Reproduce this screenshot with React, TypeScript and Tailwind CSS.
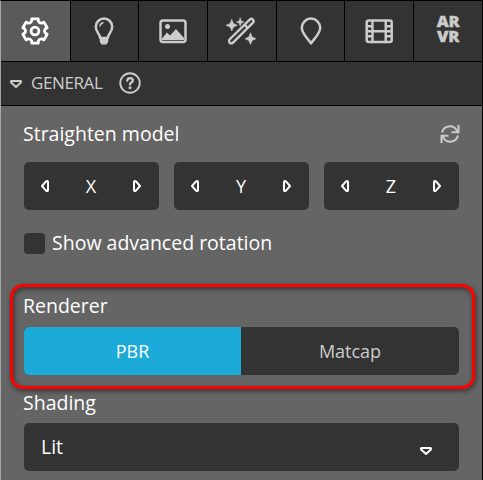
import type { ReactNode } from "react";

function Tab({ active, children }: { active?: boolean; children: ReactNode }) {
  return (
    <button
      className={
        active
          ? "flex h-[60px] items-center justify-center bg-[#5a5a5a] text-white"
          : "flex h-[60px] items-center justify-center bg-[#333333] text-[#cccccc]"
      }
    >
      {children}
    </button>
  );
}

function Icon({ children, className = "h-8 w-8" }: { children: ReactNode; className?: string }) {
  return (
    <svg
      viewBox="0 0 32 32"
      className={className}
      fill="none"
      stroke="currentColor"
      strokeWidth="2.5"
      strokeLinejoin="round"
      strokeLinecap="round"
    >
      {children}
    </svg>
  );
}

// Outline of a gear with six rounded teeth around (16, 16).
const gearPath = (() => {
  const point = (r: number, deg: number) => {
    const a = (deg * Math.PI) / 180;
    return `${(16 + r * Math.cos(a)).toFixed(2)} ${(16 + r * Math.sin(a)).toFixed(2)}`;
  };
  let d = "";
  for (let i = 0; i < 6; i++) {
    const c = -90 + i * 60;
    d += `${i ? "L" : "M"}${point(10.4, c - 19)} L${point(12.6, c - 15)} L${point(12.6, c + 15)} L${point(10.4, c + 19)} Q${point(8.8, c + 30)} ${point(10.4, c + 41)} `;
  }
  return d + "Z";
})();

function SideTriangle({ flip }: { flip?: boolean }) {
  return (
    <svg viewBox="0 0 10 14" className={flip ? "h-[14px] w-[10px] rotate-180" : "h-[14px] w-[10px]"} fill="none" stroke="white" strokeWidth="2" strokeLinejoin="round">
      <path d="M2 7 L5.8 2.6 Q8 1 8 3 V11 Q8 13 5.8 11.4 Z" />
    </svg>
  );
}

function DownTriangle({ className }: { className: string }) {
  return (
    <svg viewBox="0 0 14 10" className={className} fill="none" stroke="currentColor" strokeWidth="2" strokeLinejoin="round">
      <path d="M3 2 H11 Q13 2 11.6 3.8 L7 8 L2.4 3.8 Q1 2 3 2 Z" />
    </svg>
  );
}

function AxisControl({ axis }: { axis: string }) {
  return (
    <div className="flex h-12 w-[135px] items-center justify-between rounded-[5px] bg-[#333333] pr-[17px] pl-4 text-[18px]">
      <SideTriangle />
      <span>{axis}</span>
      <SideTriangle flip />
    </div>
  );
}

export default function App() {
  return (
    <div className="h-[480px] w-[483px] overflow-hidden border-t border-r border-l border-t-black border-r-black border-l-[#a5a5a5] bg-[#656565] font-['Open_Sans',sans-serif] text-white">
      <nav className="grid grid-cols-[69px_67px_68px_68px_67px_68px_68px] gap-px border-b border-black bg-black">
        <Tab active>
          <Icon className="mr-px h-8 w-8">
            <g strokeWidth="2.8">
              <path d={gearPath} />
              <circle cx="16" cy="16" r="3.9" />
            </g>
          </Icon>
        </Tab>
        <Tab>
          <Icon className="mr-px h-8 w-8">
            <path d="M12.2 23 C12.2 19 7.8 17.5 7.8 11.8 A8.2 8.2 0 0 1 24.2 11.8 C24.2 17.5 19.8 19 19.8 23 Z" />
            <path d="M12 11 Q12.4 8.4 15 7.8" strokeWidth="1.5" />
            <path d="M11.8 24 H20.2 V27 L18.5 29.5 H13.5 L11.8 27 Z" fill="currentColor" stroke="none" />
          </Icon>
        </Tab>
        <Tab>
          <Icon>
            <rect x="3.5" y="5.5" width="25" height="21.5" rx="2.5" />
            <circle cx="10.5" cy="11.5" r="2.5" fill="currentColor" stroke="none" />
            <path d="M5 25 V23.5 L10 17.5 L13 20.5 L19 14 L27 23 V25 Z" fill="currentColor" stroke="none" />
          </Icon>
        </Tab>
        <Tab>
          <Icon className="mr-[2px] h-8 w-8">
            <path d="M4.5 24.5 L25 4.3 Q26.5 3.2 28 4.7 Q29.3 6.2 28 7.6 L7.8 27.8 Q6.3 29 4.7 27.7 Q3.4 26 4.5 24.5 Z M19.5 9.7 L22.7 12.9" strokeWidth="2.4" />
            <path d="M6.8 4.5 L8.5 8.5 L12.5 10.3 L8.5 12 L6.8 16 L5 12 L1 10.3 L5 8.5 Z M15.2 3 L16.3 5.9 L19 7 L16.3 8.1 L15.2 11 L14 8.1 L11.3 7 L14 5.9 Z M25.5 18 L27.2 22 L31 23.7 L27.2 25.5 L25.5 29.5 L23.7 25.5 L20 23.7 L23.7 22 Z" fill="currentColor" strokeWidth="0.5" />
          </Icon>
        </Tab>
        <Tab>
          <Icon>
            <path d="M16 28.5 C13.5 24 6.8 19 6.8 12.8 A9.2 9.2 0 0 1 25.2 12.8 C25.2 19 18.5 24 16 28.5 Z" />
          </Icon>
        </Tab>
        <Tab>
          <Icon>
            <rect x="3.7" y="5.5" width="25" height="21.5" rx="2" />
            <path d="M9.5 6 V27 M22.7 6 V27 M9.5 16.2 H22.7 M4 11.2 H9 M4 16.2 H9 M4 21.3 H9 M23 11.2 H28 M23 16.2 H28 M23 21.3 H28" strokeWidth="2.4" />
          </Icon>
        </Tab>
        <Tab>
          <span className="-mt-[7px] flex flex-col text-center text-[16.5px] leading-[15px] font-extrabold tracking-[-0.2px] [-webkit-text-stroke:0.35px_#cccccc]">
            <span>AR</span>
            <span>VR</span>
          </span>
        </Tab>
      </nav>

      <header className="flex h-11 items-center border-b border-black bg-[#333333] pl-[8px] text-[#cccccc]">
        <DownTriangle className="h-[10px] w-[14px]" />
        <span className="-mt-px ml-2 w-[87px] text-[17px] tracking-[-0.4px]">GENERAL</span>
        <Icon className="-mt-px h-6 w-6">
          <circle cx="16" cy="16" r="13" />
          <path d="M12.3 12.8 Q12.8 9.5 16 9.5 Q19.8 9.5 19.8 12.7 Q19.8 14.3 17.8 15.3 Q16 16.3 16 18" strokeWidth="3" />
          <circle cx="16" cy="22.2" r="2" fill="currentColor" stroke="none" />
        </Icon>
      </header>

      <main className="pr-[23px] pl-[23px]">
        <div className="flex h-14 items-center justify-between">
          <h2 className="-ml-px text-[19.5px]">Straighten model</h2>
          <svg viewBox="0 0 20 20" className="-mr-px h-5 w-5" fill="none" stroke="#cccccc" strokeWidth="2">
            <path d="M2 8.5 A8 8 0 0 1 16.5 6 L18 8 M18.5 1 V8.2 H11.5 M18 11.5 A8 8 0 0 1 3.5 14 L2 12 M1.5 19 V11.8 H8.5" />
          </svg>
        </div>
        <div className="flex gap-[15px]">
          <AxisControl axis="X" />
          <AxisControl axis="Y" />
          <AxisControl axis="Z" />
        </div>
        <label className="mt-[23px] flex h-[21px] items-center gap-[7px] text-[19.5px]">
          <span className="h-[21px] w-[21px] rounded-[4px] bg-[#333333]" />
          <span className="-mt-[2px]">Show advanced rotation</span>
        </label>

        <section className="-mr-[16px] -ml-[14px] mt-[30px] h-[105px] rounded-[13px] border-[3px] border-[#ff0000] px-[11px] pt-[3px] shadow-[1px_2px_5px_rgba(0,0,0,0.5),inset_1px_2px_5px_rgba(0,0,0,0.5)]">
          <h2 className="-ml-px h-[37px] text-[19.5px] leading-[32px]">Renderer</h2>
          <div className="grid h-12 w-[435px] grid-cols-[217px_218px] overflow-hidden rounded-[5px] bg-[#333333] text-[18px]">
            <button className="bg-[#1caad9]">PBR</button>
            <button className="text-[#cccccc]">Matcap</button>
          </div>
        </section>

        <h2 className="-ml-px h-[34px] text-[19.5px] leading-[28px]">Shading</h2>
        <button className="flex h-12 w-full items-center justify-between rounded-[5px] bg-[#333333] pr-[26px] pl-[17px] text-[19.5px]">
          <span>Lit</span>
          <DownTriangle className="mt-2 h-[10px] w-[14px]" />
        </button>
      </main>
    </div>
  );
}
